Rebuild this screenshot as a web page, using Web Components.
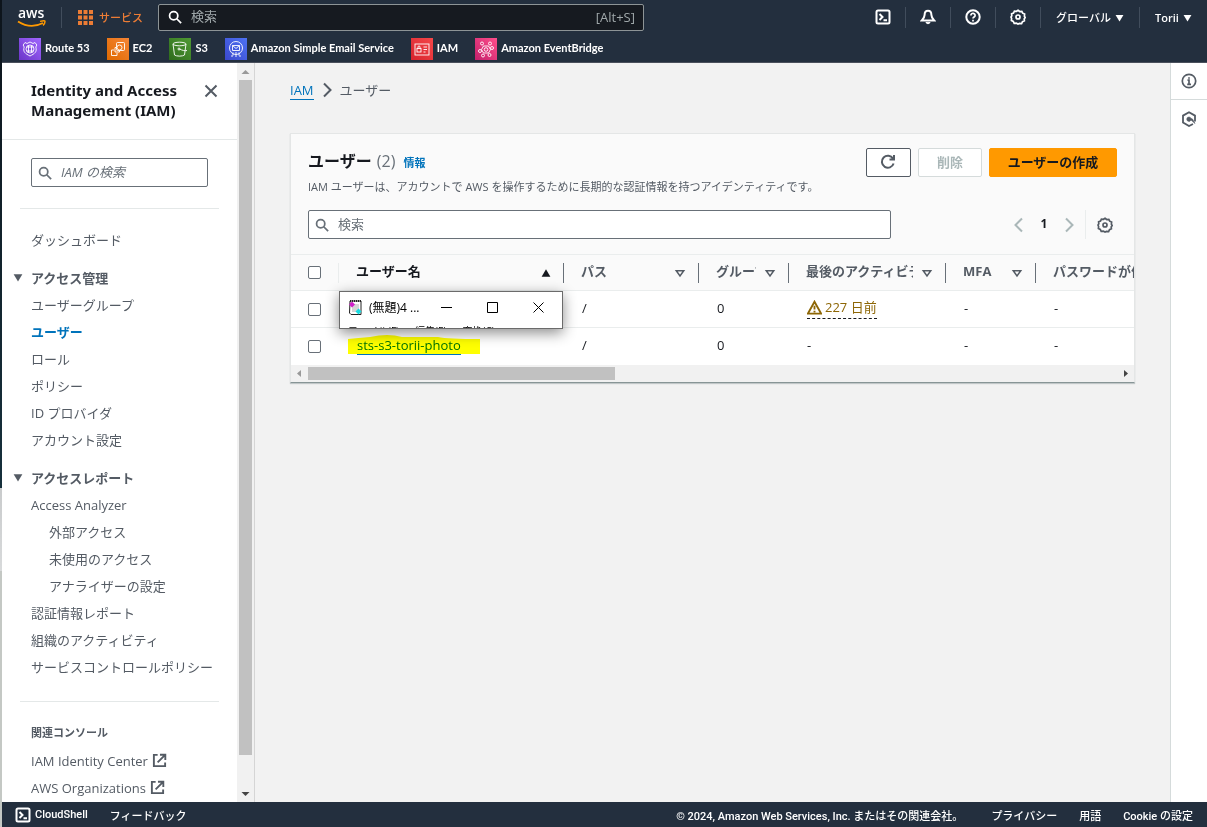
<!DOCTYPE html>
<html lang="ja">
<head>
<meta charset="utf-8">
<title>IAM ユーザー</title>
<style>
html,body{height:100%;margin:0}
body{font-family:"Open Sans","Noto Sans CJK JP",sans-serif;font-size:13px;color:#16191f;background:#f2f2f2;overflow:hidden}
</style>
</head>
<body>
<iam-console></iam-console>
<script>
const ICONS={
search:'<circle cx="6.5" cy="6.5" r="4.7"/><path d="M10 10l5 5"/>',
shell:'<rect x="1.5" y="1.5" width="13" height="13" rx="1.5"/><path d="M4.5 5l3 3-3 3M8.5 11.2h3.5"/>',
bell:'<path d="M8 1.8c-2.6 0-3.400 2-3.400 4.200 0 2.400-1.200 3.600-3 5.600h12.800c-1.800-2-3-3.200-3-5.600 0-2.200-.8-4.200-3.400-4.200z"/><path d="M6.300 13a1.800 1.700 0 003.400 0"/>',
help:'<circle cx="8" cy="8" r="6.700"/><path d="M5.900 6.500a2.100 2.100 0 114.100.5c-.3 1-2 1.200-2 2.500M8 10.800v1.600" stroke-width="1.700"/>',
gear:'<path stroke-width="1.700" d="M8 1.200l1.700 1.300 2.100-.2.900 1.900 1.900.9-.2 2.100L15.200 8.500l-1 1.500.2 1.800-1.900.9-.9 1.900-2.100-.2L8 15l-1.700-.9-2.100.2-.9-1.900-1.900-.9.200-2L1 8l.8-1.200-.2-2 1.900-.8.900-1.900 2.100.2z"/><circle cx="8" cy="8" r="2" stroke-width="1.700"/>',
info:'<circle cx="8" cy="8" r="6.700" stroke-width="1.700"/><path stroke-width="1.700" d="M6.500 7.200H8v4M6.200 11.300h3.800M8 4.200v1.600"/>',
hex:'<path stroke-width="1.800" d="M12 13l-4 2-6-3.500V4.600L8 1.200l6 3.400v5.900"/><path d="M8 6a2.200 2.200 0 102 3l4 3.500-2.500-4.500-1.500-.5A2.200 2.200 0 008 6z" fill="currentColor" stroke-width=".6"/>',
close:'<path d="M2.500 2.500l11 11M13.500 2.500l-11 11"/>',
external:'<path d="M6 2H2v12h12v-4M8.500 1.800h5.700V7.500M14 2L6 10"/>',
refresh:'<path d="M13.600 9.500A6 6 0 1113 4.600M14 1v4.500H9.500"/>',
left:'<path d="M11 1.500L4.500 8l6.500 6.500"/>',
right:'<path d="M5 1.500L11.500 8 5 14.500"/>',
warn:'<path d="M8 1.800L15 14.500H1z"/><path d="M8 6v4M8 11.500v1.700"/>',
sort:'<path d="M3 5h10L8 12z"/>',
asc:'<path d="M8 2l7 12H1z" fill="currentColor" stroke="none"/>',
down:'<path d="M1 3.500h14L8 15z" fill="currentColor" stroke="none"/>',
apps:'<path fill="currentColor" stroke="none" d="M1 1h4v4H1zM6.500 1h4v4h-4zM12 1h4v4h-4zM1 6.500h4v4H1zM6.500 6.500h4v4h-4zM12 6.500h4v4h-4zM1 12h4v4H1zM6.500 12h4v4h-4zM12 12h4v4h-4z"/>'
};
class Base extends HTMLElement{
  constructor(){super();this.attachShadow({mode:'open'});}
  connectedCallback(){this.shadowRoot.innerHTML='<style>*{box-sizing:border-box}'+this.css()+'</style>'+this.html();}
  css(){return ''} html(){return '<slot></slot>'}
}
customElements.define('ui-icon',class extends Base{
  css(){const s=this.getAttribute('size')||16;return `:host{display:inline-block;flex:none;width:${s}px;height:${s}px}svg{display:block}`}
  html(){const s=this.getAttribute('size')||16;return `<svg aria-hidden="true" width="${s}" height="${s}" viewBox="0 0 16 16" fill="none" stroke="currentColor" stroke-width="${this.getAttribute('stroke')||2}">${ICONS[this.getAttribute('name')]}</svg>`}
});
const MARKS={
route53:['#a166ff','#6b35c8','<path d="M6 4.500l2 1 3-1.500 3 1.500 2-1 1.800 2.500-1 2c1.500 5-1 6.500-5.800 9-4.800-2.500-7.300-4-5.800-9l-1-2z"/><circle cx="11" cy="11" r="4"/><path d="M8 9h6M8 13h6M9.500 8v6M12.500 8v6"/>'],
ec2:['#f58536','#e06a00','<rect x="9.500" y="4.500" width="8" height="8" rx="1"/><path d="M9.500 9.500h-1.500v4.500h4.500v-1.500M7 12H4.500v5.500H10V15"/><circle cx="12.500" cy="9.500" r="2.500"/>'],
s3:['#4f9a33','#2e6b1c','<ellipse cx="10.500" cy="6" rx="6.500" ry="1.800"/><path d="M4 6l1.500 11c2 1.500 8 1.500 10 0L17 6M10.500 11c3 1.500 5.500 2 7.500 1.500"/><circle cx="10" cy="11" r="1"/>'],
ses:['#4d72f3','#3b48cc','<circle cx="11" cy="10" r="6.500"/><path d="M7.500 7.500h7v5h-7zM7.500 7.500l3.500 3 3.500-3M8 14.500v3M14 14.500v3M11 14v3M6 18h2M10 18h2M14 18h2"/>'],
iam:['#f54749','#d6242d','<rect x="4" y="6" width="14" height="11"/><rect x="6" y="10.500" width="4" height="3.500"/><path d="M7 10.500V9a1 1 0 012 0v1.500M12.500 9h3.500M12.500 11.500h3.500M12.500 14h2"/>'],
bridge:['#ff4f8b','#c4206c','<path d="M8.500 8h5l2 3.500-2 3.500h-5l-2-3.500z"/><circle cx="11" cy="11.500" r="1.800"/><circle cx="7" cy="5.500" r="1.500"/><circle cx="15" cy="5.500" r="1.500"/><circle cx="5" cy="13" r="1.500"/><circle cx="17" cy="10" r="1.500"/><circle cx="8" cy="17.500" r="1.500"/><circle cx="14.500" cy="17" r="1.500"/>']
};
customElements.define('service-link',class extends Base{
  css(){return `:host{display:block}a{display:flex;align-items:flex-start;gap:4px;color:#fff;text-decoration:none;font-family:Lato,"Noto Sans CJK JP",sans-serif;font-size:11px;font-weight:700;line-height:20px;white-space:nowrap}`}
  html(){const k=this.getAttribute('mark'),m=MARKS[k];return `<a href="#"><svg aria-hidden="true" width="22" height="22" viewBox="0 0 22 22"><defs><linearGradient id="g" x1="1" y1="0" x2="0" y2="1"><stop stop-color="${m[0]}"/><stop offset="1" stop-color="${m[1]}"/></linearGradient></defs><rect width="22" height="22" fill="url(#g)"/><g fill="none" stroke="#fff" stroke-width=".9">${m[2]}</g></svg><slot></slot></a>`}
});
customElements.define('search-box',class extends Base{
  css(){return `:host{display:block;color:#687078;--field:#fff;--line:#687078;--hint:#687078}label{display:flex;align-items:center;gap:9px;height:29px;padding:0 7px 0 6px;background:var(--field);border:1px solid var(--line);border-radius:2px}
  :host([dark]){color:#fff;--field:#161a20;--line:#8d9496;--hint:#a0a8aa}:host([dark]) label{height:27px;padding:0 8px 0 9px}
  input{flex:1;min-width:0;border:0;padding:0 0 2px;outline:0;background:none;font:inherit;color:inherit;line-height:20px}
  input::placeholder{color:var(--hint);opacity:1}:host([slanted]) input{font-style:italic}`}
  html(){const p=this.getAttribute('hint');return `<label><ui-icon name="search" size="14"></ui-icon><input type="text" aria-label="${p}" placeholder="${p}"><slot></slot></label>`}
});
customElements.define('top-bar',class extends Base{
  css(){return `:host{display:block;background:#232f3e;color:#fff;height:63px;border-bottom:1px solid #4a505c}
  .row{display:flex;align-items:center;height:34px;padding-left:15px}.logo{width:30px;height:24px;display:block;overflow:visible}
  button{display:flex;align-items:center;justify-content:center;background:none;border:0;padding:0;color:inherit;font:inherit;font-size:11px;font-weight:500;height:34px;white-space:nowrap}
  i{width:1px;height:21px;background:#414d5c;flex:none}.menu{color:#ec7c35;gap:6px;padding:0 15px 0 15px}
  .lead{margin-left:14px}search-box{flex:0 1 486px}.key{font-size:13px;color:#a0a8aa}
  .tools{margin-left:auto;display:flex;align-items:center}.tools button{width:44px}.tools .wide{width:98px;gap:4px}.tools .user{width:67px;gap:4px;font-weight:600}
  nav{display:flex;gap:17px;padding:4px 17px}`}
  html(){return `<div class="row"><a href="#" aria-label="aws"><svg class="logo" viewBox="0 0 30 24"><text x="1" y="13" font-family="Open Sans" font-size="14" font-weight="600" fill="#fff">aws</text><path d="M1 16.500q12.500 8 25 1.500" fill="none" stroke="#ff9900" stroke-width="1.800"/><path d="M23 16.400q5-1.400 5 0 0 2-2 4" fill="none" stroke="#ff9900" stroke-width="1.500"/></svg></a><i class="lead"></i>
  <button class="menu"><ui-icon name="apps"></ui-icon>サービス</button><search-box dark hint="検索"><span class="key">[Alt+S]</span></search-box>
  <div class="tools"><button aria-label="CloudShell"><ui-icon name="shell"></ui-icon></button><i></i><button aria-label="通知"><ui-icon name="bell"></ui-icon></button><i></i><button aria-label="ヘルプ"><ui-icon name="help"></ui-icon></button><i></i><button aria-label="設定"><ui-icon name="gear"></ui-icon></button><i></i><button class="wide">グローバル<ui-icon name="down" size="9"></ui-icon></button><i></i><button class="user">Torii<ui-icon name="down" size="9"></ui-icon></button></div></div>
  <nav><service-link mark="route53">Route 53</service-link><service-link mark="ec2">EC2</service-link><service-link mark="s3">S3</service-link><service-link mark="ses">Amazon Simple Email Service</service-link><service-link mark="iam">IAM</service-link><service-link mark="bridge">Amazon EventBridge</service-link></nav>`}
});
customElements.define('nav-item',class extends Base{
  css(){return `:host{display:block}a{display:flex;align-items:center;gap:4px;height:27px;color:#545b64;text-decoration:none;font-size:13px;white-space:nowrap}:host([deep]) a{padding-left:18px}:host([current]) a{color:#0073bb;font-weight:700}`}
  html(){return `<a href="#"><slot></slot>${this.hasAttribute('ext')?'<ui-icon name="external" size="15"></ui-icon>':''}</a>`}
});
customElements.define('nav-group',class extends Base{
  css(){return `:host{display:block;margin-top:10px}button{display:flex;align-items:center;gap:8px;height:28px;border:0;padding:0;margin-left:-18px;background:none;font:inherit;font-weight:700;color:#545b64}`}
  html(){return `<button aria-expanded="true"><ui-icon name="down" size="10"></ui-icon>${this.getAttribute('label')}</button><slot></slot>`}
});
customElements.define('scroll-bar',class extends Base{
  css(){return `:host{display:flex;flex-direction:column;align-items:center;justify-content:space-between;width:17px;background:#f1f1f1}
  b{display:block;width:13px;flex:0 1 675px;background:#c1c1c1}svg{display:block;flex:none;width:17px;height:17px}.fill{flex:1 1 30px}
  :host([flat]){flex-direction:row;width:auto;height:17px}:host([flat]) svg:first-child{width:16px}:host([flat]) b{width:auto;height:13px;flex:0 0 36.4%}:host([flat]) .fill{flex:1}`}
  html(){return this.hasAttribute('flat')?'<svg viewBox="0 0 17 17"><path d="M10 5v7L6 8.500z" fill="#999"/></svg><b></b><div class="fill"></div><svg viewBox="0 0 17 17"><path d="M7 5v7l4-3.500z" fill="#444"/></svg>':'<svg viewBox="0 0 17 17"><path d="M4.500 11h8l-4-4z" fill="#999"/></svg><b></b><div class="fill"></div><svg viewBox="0 0 17 17"><path d="M4.500 7h8l-4 4z" fill="#444"/></svg>'}
});
customElements.define('side-nav',class extends Base{
  css(){return `:host{display:flex;width:253px;flex:none;background:#fff;border-right:1px solid #d5d5d5;overflow:hidden}
  .body{flex:1;min-width:0;overflow:hidden}header{display:flex;justify-content:space-between;align-items:flex-start;padding:17px 18px 19px 29px;border-bottom:1px solid #e4e8e8}
  h2{margin:0;font-family:"Noto Sans",sans-serif;font-size:15px;line-height:20px;font-weight:700;white-space:nowrap}header button{border:0;background:none;padding:3px 0;color:#545b64}
  .list{padding:18px 29px 0}hr{border:0;border-top:1px solid #e4e8e8;margin:21px -11px 17px}h3{margin:0;font-size:11px;line-height:28px;font-weight:700;color:#545b64}`}
  html(){return `<div class="body"><header><h2>Identity and Access<br>Management (IAM)</h2><button aria-label="閉じる"><ui-icon name="close"></ui-icon></button></header><div class="list"><search-box slanted hint="IAM の検索"></search-box><hr>
  <nav-item>ダッシュボード</nav-item><nav-group label="アクセス管理"><nav-item>ユーザーグループ</nav-item><nav-item current>ユーザー</nav-item><nav-item>ロール</nav-item><nav-item>ポリシー</nav-item><nav-item>ID プロバイダ</nav-item><nav-item>アカウント設定</nav-item></nav-group>
  <nav-group label="アクセスレポート"><nav-item>Access Analyzer</nav-item><nav-item deep>外部アクセス</nav-item><nav-item deep>未使用のアクセス</nav-item><nav-item deep>アナライザーの設定</nav-item><nav-item>認証情報レポート</nav-item><nav-item>組織のアクティビティ</nav-item><nav-item>サービスコントロールポリシー</nav-item></nav-group><hr>
  <h3>関連コンソール</h3><nav-item ext>IAM Identity Center</nav-item><nav-item ext>AWS Organizations</nav-item></div></div><scroll-bar></scroll-bar>`}
});
customElements.define('float-window',class extends Base{
  css(){return `:host{display:block;width:224px;height:38px;background:#fff;border:1px solid #6b6b6b;box-shadow:0 4px 14px rgba(0,0,0,.45);overflow:hidden;color:#000}
  .bar{display:flex;align-items:center;height:30px;padding-left:8px;font-size:12px;gap:6px;white-space:nowrap}.t{flex:1}button{width:32px;height:30px;border:0;background:none;padding:0;margin-right:8px;display:flex;align-items:center;justify-content:center}
  .menu{display:flex;gap:16px;padding:2px 0 0 8px;font-size:10px;line-height:14px;height:8px;overflow:hidden;white-space:nowrap}`}
  html(){return `<div class="bar"><svg width="15" height="17" viewBox="0 0 15 17" aria-hidden="true"><path d="M2 2h11v13.500H3L1.500 14z" fill="#fff" stroke="#222"/><path d="M4 6h7M4 8h7M4 10h7M4 12h5" stroke="#aaa"/><path d="M2 2h12" stroke="#222" stroke-width="2" stroke-dasharray="1 1"/><path d="M4 2.500l3 3-3 3-3-3z" fill="#d020c8"/><path d="M10.500 9.500l3 3-3 3-3-3z" fill="#18dce0"/></svg><span class="t">(無題)4 ...</span>
  <button aria-label="最小化"><svg width="11" height="11"><path d="M0 5.500h11" stroke="#000"/></svg></button><button aria-label="最大化"><svg width="11" height="11"><path d="M.5.500h10v10H.500z" fill="none" stroke="#000"/></svg></button><button aria-label="閉じる"><svg width="11" height="11"><path d="M.5.500l10 10M10.500.500l-10 10" stroke="#000"/></svg></button></div><div class="menu"><span>ファイル(F)</span><span>編集(E)</span><span>変換(C)</span></div>`}
});
customElements.define('user-table',class extends Base{
  css(){return `:host{display:block;overflow:hidden;background:#fff}table{table-layout:fixed;width:max(100%,945px);border-collapse:separate;border-spacing:0;font-size:13px}
  th,td{height:37px;padding:0 0 2px 18px;text-align:left;white-space:nowrap;overflow:hidden;border-bottom:1px solid #eaeded;line-height:20px}td:first-child{padding-left:17px}th{background:#fafafa;color:#545b64;font-weight:700;border-top:1px solid #eaeded;font-size:13px}tr:last-child td{border-bottom:0;padding-bottom:4px}
  th{padding:0}th div{display:flex;align-items:center;height:20px;padding:0 12px 0 17px;border-right:1px solid #687078}th.pick div{border-color:#eaeded}th span{flex:1;overflow:hidden;margin-right:8px;line-height:16px;padding-bottom:4px}.on{color:#16191f}
  th:last-child div{border:0}input{appearance:none;width:13px;height:13px;margin:0;border:1px solid #687078;border-radius:2px;background:#fff;display:block}td input{margin-top:3px}
  a{color:#0073bb;text-decoration:none;border-bottom:1px solid}.mark{position:relative;display:inline-block}.mark svg{position:absolute;left:-9px;top:-1px;mix-blend-mode:multiply}
  .old{display:inline-flex;align-items:center;gap:3px;color:#8d6605;border-bottom:1px dashed #16191f;line-height:21px}`}
  html(){const h=(t,c='',i='sort',s=12)=>`<th class="${c}"><div><span>${t}</span><ui-icon name="${i}" size="${s}"></ui-icon></div></th>`;
  return `<table><colgroup><col style="width:48px"><col style="width:225px"><col style="width:135px"><col style="width:90px"><col style="width:157px"><col style="width:90px"><col></colgroup>
  <thead><tr><th class="pick"><div><input type="checkbox" aria-label="すべて選択"></div></th>${h('ユーザー名','on','asc',10)}${h('パス')}${h('グループ')}${h('最後のアクティビティ')}${h('MFA')}${h('パスワードが作成されてから')}</tr></thead>
  <tbody><tr><td><input type="checkbox" aria-label="1 行目を選択"></td><td></td><td>/</td><td>0</td><td><span class="old"><ui-icon name="warn" size="15"></ui-icon>227 日前</span></td><td>-</td><td>-</td></tr>
  <tr><td><input type="checkbox" aria-label="2 行目を選択"></td><td><span class="mark"><a href="#">sts-s3-torii-photo</a><svg aria-hidden="true" width="132" height="22" viewBox="0 0 132 22"><path d="M0 5Q10 4 22 3Q40-1 54 3L90 3Q100 5 132 5V20H0z" fill="#ff0"/></svg></span></td><td>/</td><td>0</td><td>-</td><td>-</td><td>-</td></tr></tbody></table>`}
});
customElements.define('user-panel',class extends Base{
  css(){return `:host{display:block;position:relative;border:1px solid #e4e6e6;border-bottom-color:#879596;background:#fafafa;box-shadow:0 1px 1px rgba(0,28,36,.2)}
  .head{padding:13px 17px 15px}.top,.find{display:flex;align-items:center}.top{gap:7px}h1{margin:0;font-size:16px;line-height:28px;flex:1}h1 span{font-weight:400;color:#687078;margin:0 2px 0 1px}h1 a{font-size:11px;color:#0073bb;text-decoration:none;margin-left:2px}
  p{margin:2px 0 15px;font-size:11px;line-height:16px;color:#545b64}button{height:29px;border:1px solid #545b64;border-radius:2px;background:#fff;font:inherit;font-weight:700;padding:0 18px 2px;color:#545b64;display:flex;align-items:center;justify-content:center}
  button:disabled{border-color:#d5dbdb;color:#aab7b8}.icon{width:45px;padding:0}.new{background:#f90;border-color:#f90;color:#16191f;padding:0 0 2px;width:128px}.find search-box{flex:0 1 583px}
  .page{display:flex;align-items:center;margin:0 4px 0 auto}.page button{border:0;background:none;padding:0;width:16px}.page button:disabled{color:#aab7b8}.page b{width:34px;text-align:center;font-size:12px;padding-bottom:2px}.page i{width:1px;height:29px;background:#eaeded;margin:0 11px 0 8px}.page .set{color:#545b64}
  float-window{position:absolute;left:48px;top:157px}`}
  html(){return `<div class="head"><div class="top"><h1>ユーザー <span>(2)</span> <a href="#">情報</a></h1><button class="icon" aria-label="更新"><ui-icon name="refresh"></ui-icon></button><button disabled>削除</button><button class="new">ユーザーの作成</button></div>
  <p>IAM ユーザーは、アカウントで AWS を操作するために長期的な認証情報を持つアイデンティティです。</p><div class="find"><search-box hint="検索"></search-box><div class="page"><button disabled aria-label="前へ"><ui-icon name="left"></ui-icon></button><b>1</b><button disabled aria-label="次へ"><ui-icon name="right"></ui-icon></button><i></i><button class="set" aria-label="表示設定"><ui-icon name="gear"></ui-icon></button></div></div></div><user-table></user-table><scroll-bar flat></scroll-bar><float-window></float-window>`}
});
customElements.define('main-area',class extends Base{
  css(){return `:host{display:block;flex:1;min-width:0;padding:17px 35px 0}nav{display:flex;align-items:center;gap:5px;line-height:20px;margin-bottom:33px;color:#545b64}nav a{color:#0073bb;text-decoration:none;border-bottom:1px solid;line-height:18px}`}
  html(){return `<nav aria-label="パンくず"><a href="#">IAM</a><ui-icon name="right"></ui-icon><span>ユーザー</span></nav><user-panel></user-panel>`}
});
customElements.define('tool-rail',class extends Base{
  css(){return `:host{box-sizing:border-box;display:block;width:37px;flex:none;background:#fff;border-left:1px solid #d5dbdb}button{display:flex;align-items:center;justify-content:center;width:100%;height:37px;border:0;border-bottom:1px solid #d5dbdb;background:none;color:#545b64;padding:0}button+button{border:0}`}
  html(){return `<button aria-label="情報"><ui-icon name="info"></ui-icon></button><button aria-label="チュートリアル"><ui-icon name="hex"></ui-icon></button>`}
});
customElements.define('foot-bar',class extends Base{
  css(){return `:host{display:flex;align-items:center;height:25px;flex:none;background:#232f3e;color:#fff;font-family:Roboto,"Noto Sans CJK JP",sans-serif;font-size:11px;font-weight:500;padding:0 14px 0 13px;gap:22px;white-space:nowrap}a{display:flex;align-items:center;gap:4px;color:inherit;text-decoration:none}.copy{margin-left:auto;margin-right:6px}`}
  html(){return `<a href="#"><ui-icon name="shell"></ui-icon>CloudShell</a><a href="#">フィードバック</a><span class="copy">© 2024, Amazon Web Services, Inc. またはその関連会社。</span><a href="#">プライバシー</a><a href="#">用語</a><a href="#">Cookie の設定</a>`}
});
customElements.define('iam-console',class extends Base{
  css(){return `:host{box-sizing:border-box;display:flex;flex-direction:column;height:100vh;padding-left:2px;background:linear-gradient(#0d141b,#16303c 59%,#c9cbcc 59%,#d8dadb 69%,#c4c8c4 69%)}.mid{display:flex;flex:1;min-height:0;background:#f2f2f2}`}
  html(){return `<top-bar></top-bar><div class="mid"><side-nav></side-nav><main-area></main-area><tool-rail></tool-rail></div><foot-bar></foot-bar>`}
});
</script>
</body>
</html>
